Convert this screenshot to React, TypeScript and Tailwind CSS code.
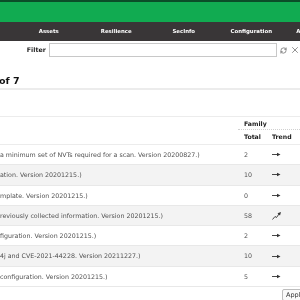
import React from 'react';
import { RefreshCw, X } from 'lucide-react';

type Row = { text: string; total: string; trend: 'flat' | 'up' };

const rows: Row[] = [
  { text: 'a minimum set of NVTs required for a scan. Version 20200827.)', total: '2', trend: 'flat' },
  { text: 'ation. Version 20201215.)', total: '10', trend: 'flat' },
  { text: 'mplate. Version 20201215.)', total: '0', trend: 'flat' },
  { text: 'reviously collected information. Version 20201215.)', total: '58', trend: 'up' },
  { text: 'figuration. Version 20201215.)', total: '2', trend: 'flat' },
  { text: '4j and CVE-2021-44228. Version 20211227.)', total: '10', trend: 'flat' },
  { text: 'configuration. Version 20201215.)', total: '5', trend: 'flat' },
];

const navItems = ['Assets', 'Resilience', 'SecInfo', 'Configuration', 'Administration'];

const TrendIcon = ({ trend }: { trend: 'flat' | 'up' }) =>
  trend === 'flat' ? (
    <svg width="9" height="5" viewBox="0 0 9 5">
      <line x1="0" y1="2.5" x2="6" y2="2.5" stroke="#333" strokeWidth="0.9" />
      <polygon points="5,0.8 8.5,2.5 5,4.2" fill="#333" />
    </svg>
  ) : (
    <svg width="9" height="8" viewBox="0 0 9 8">
      <polyline points="0.5,7.5 3,4.5 4.5,5.5 7,2" fill="none" stroke="#333" strokeWidth="0.9" />
      <polygon points="5.5,1.2 9,0 8,3.5" fill="#333" />
    </svg>
  );

export default function App() {
  return (
    <div className="w-[300px] h-[300px] overflow-hidden bg-white text-[#505050] font-['DejaVu_Sans',sans-serif] will-change-transform">
      <div className="h-[2px] bg-[#0b4d28]" />
      <div className="h-[20px] bg-[#11ab51]" />
      <nav className="h-[19px] bg-[#393637] flex items-center pl-[15px] text-white font-bold text-[5.4px] whitespace-nowrap">
        {navItems.map((item) => (
          <div key={item} className="w-[67.5px] shrink-0 text-center">
            {item}
          </div>
        ))}
      </nav>

      <div className="h-[21px] flex items-start pt-[2px]">
        <label className="w-[46px] text-right font-bold text-[6.3px] text-[#222] leading-[14px]">Filter</label>
        <div className="ml-[3px] w-[229px] h-[14px] border border-[#c8c8c8] bg-white" />
        <div className="flex items-center h-[14px] ml-[3px] gap-[3px] text-[#444]">
          <RefreshCw size={7} strokeWidth={2} />
          <X size={10} strokeWidth={1.4} />
        </div>
      </div>

      <div className="h-[26px] flex items-end pb-[2px]">
        <h2 className="-ml-[1px] font-bold text-[9.5px] leading-[11px] text-[#111]">of 7</h2>
      </div>
      <div className="h-[2px] bg-[#ececec]" />

      <div className="h-[26px]" />

      <div className="border-t border-[#ececec]">
        <div className="grid grid-cols-[238px_28px_34px] text-[6.2px] font-bold text-[#222]">
          <div className="row-span-2" />
          <div className="col-span-2 pl-[6px] h-[13px] leading-[13px] border-b border-dotted border-[#d0d0d0]">Family</div>
          <div className="pl-[6px] h-[14px] leading-[14px]">Total</div>
          <div className="pl-[6px] h-[14px] leading-[14px]">Trend</div>
        </div>
        <div className="border-t border-[#ececec]">
          {rows.map((r, i) => (
            <div
              key={i}
              className={`grid grid-cols-[238px_28px_34px] h-[20.3px] items-center border-b border-[#e8e8e8] text-[6.3px] ${
                i % 2 === 1 ? 'bg-[#f3f3f3]' : 'bg-white'
              }`}
            >
              <div className="whitespace-nowrap overflow-hidden">{r.text}</div>
              <div className="pl-[6px]">{r.total}</div>
              <div className="pl-[6px] flex items-center">
                <TrendIcon trend={r.trend} />
              </div>
            </div>
          ))}
        </div>
      </div>

      <div className="flex pt-[2px]">
        <button className="ml-[282px] shrink-0 h-[12px] px-[3px] border border-[#bdbdbd] rounded-[2px] bg-[#fafafa] text-[6.5px] text-[#333] leading-[10px] whitespace-nowrap">
          Apply
        </button>
      </div>
    </div>
  );
}
